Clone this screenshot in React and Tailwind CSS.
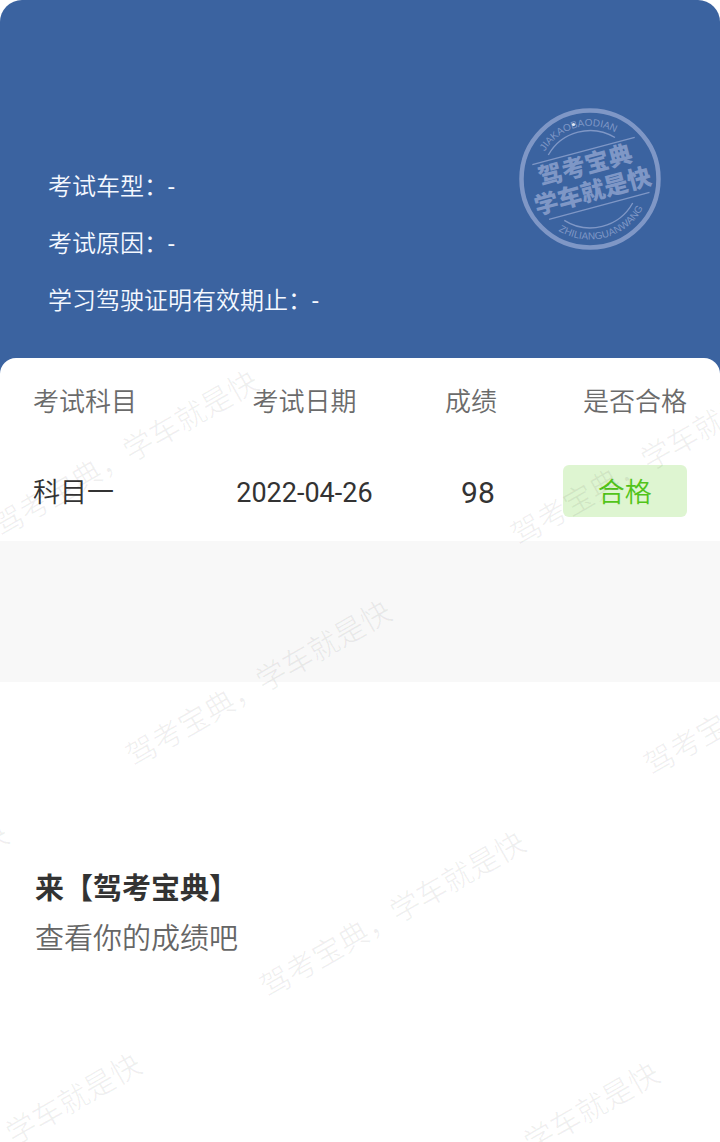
import React from "react";

const INFO = [
  { label: "考试车型", value: "-" },
  { label: "考试原因", value: "-" },
  { label: "学习驾驶证明有效期止", value: "-" },
];

const RESULTS = [
  { subject: "科目一", date: "2022-04-26", score: 98, passed: true },
];

// Centros de las marcas de agua sobre la página
const WATERMARKS = [
  "left-[126px] top-[454px]",
  "left-[644px] top-[463px]",
  "left-[259px] top-[684px]",
  "left-[777px] top-[693px]",
  "left-[-124px] top-[907px]",
  "left-[393px] top-[915px]",
  "left-[9px] top-[1137px]",
  "left-[527px] top-[1146px]",
];

function Watermarks() {
  return (
    <div aria-hidden="true" className="pointer-events-none absolute inset-0 overflow-hidden select-none">
      {WATERMARKS.map((place) => (
        <span
          key={place}
          className={`absolute -translate-x-1/2 -translate-y-1/2 -rotate-30 text-[30px] leading-none font-[350] whitespace-nowrap text-black/6 ${place}`}
        >
          驾考宝典，学车就是快
        </span>
      ))}
    </div>
  );
}

function Stamp() {
  return (
    <svg viewBox="0 0 142 142" className="size-[142px] shrink-0 text-[#7f97c6]" fill="none" stroke="currentColor">
      <defs>
        <path id="arc-top" d="M18 71 A53 53 0 0 1 124 71" />
        <path id="arc-bottom" d="M10.5 71 A60.5 60.5 0 0 0 131.5 71" />
      </defs>
      <circle cx="71" cy="71" r="68.5" strokeWidth="4.5" />
      <path d="M29.3 47 A48 48 0 0 1 96 29.5" strokeWidth="1.4" />
      <path d="M45.3 112.3 A48.5 48.5 0 0 0 113.7 95" strokeWidth="1.4" />
      <g transform="rotate(-15 71 71)">
        <path d="M19 42.3 H125 M21 99.3 H125" strokeWidth="1.3" />
        <g fill="currentColor" stroke="none" fontSize="24" fontWeight="900" textAnchor="middle">
          <text x="70" y="65">驾考宝典</text>
          <text x="70.5" y="92">学车就是快</text>
        </g>
      </g>
      <g fill="currentColor" stroke="none" fontSize="10" fontFamily="Liberation Sans, sans-serif" textAnchor="middle">
        <text transform="rotate(-15 71 71)">
          <textPath href="#arc-top" startOffset="50%">JIAKAOBAODIAN</textPath>
        </text>
        <text transform="rotate(-15 71 71)">
          <textPath href="#arc-bottom" startOffset="50%">ZHILIANGUANWANG</textPath>
        </text>
      </g>
      <circle cx="54.5" cy="16.5" r="1.6" fill="#dfe6f3" stroke="none" />
    </svg>
  );
}

function Header() {
  return (
    <header className="flex items-start justify-between rounded-t-[22px] bg-[#3b63a0] pt-[108px] pr-[59px] pb-14 pl-12">
      <ul className="flex flex-col gap-6 pt-[63px] text-2xl leading-[33px] font-[350] text-[#f4f8ff]">
        {INFO.map((item) => (
          <li key={item.label}>
            {item.label}：<span className="font-normal">{item.value}</span>
          </li>
        ))}
      </ul>
      <Stamp />
    </header>
  );
}

function ResultTable() {
  return (
    <section className="-mt-4 rounded-t-2xl bg-white px-[33px] pt-[25px] pb-6">
      <table className="w-full table-fixed">
        <colgroup>
          <col className="w-[20%]" />
          <col className="w-[43%]" />
          <col className="w-[18%]" />
          <col className="w-[19%]" />
        </colgroup>
        <thead className="text-[26px] leading-[38px] text-[#6b6b6b]">
          <tr className="whitespace-nowrap">
            <th className="text-left font-[350]">考试科目</th>
            <th className="text-center font-[350]">考试日期</th>
            <th className="text-left font-[350]">成绩</th>
            <th className="text-right font-[350]">是否合格</th>
          </tr>
        </thead>
        <tbody className="text-[27px] leading-[48px] text-[#333]">
          {RESULTS.map((row) => (
            <tr key={row.subject} className="whitespace-nowrap">
              <td className="pt-12 font-[350]">{row.subject}</td>
              <td className="pt-12 text-center">{row.date}</td>
              <td className="pt-12 pl-4 text-[30px]">{row.score}</td>
              <td className="pt-11">
                <div className="rounded-md bg-[#def5d1] pt-1 text-center font-[350] text-[#52c41a]">
                  {row.passed ? "合格" : "不合格"}
                </div>
              </td>
            </tr>
          ))}
        </tbody>
      </table>
    </section>
  );
}

export default function App() {
  return (
    <main
      lang="zh-CN"
      className="relative min-h-screen overflow-hidden bg-white font-[Roboto,'Noto_Sans_CJK_SC',sans-serif]"
    >
      <Header />
      <ResultTable />
      <div className="h-[141px] bg-[#f8f8f8]" />
      <section className="px-[35px] pt-[185px] text-[29px]">
        <h1 className="leading-[44px] font-bold text-[#333]">来【驾考宝典】</h1>
        <p className="pt-[6px] leading-[44px] font-[350] text-[#666]">查看你的成绩吧</p>
      </section>
      <Watermarks />
    </main>
  );
}
